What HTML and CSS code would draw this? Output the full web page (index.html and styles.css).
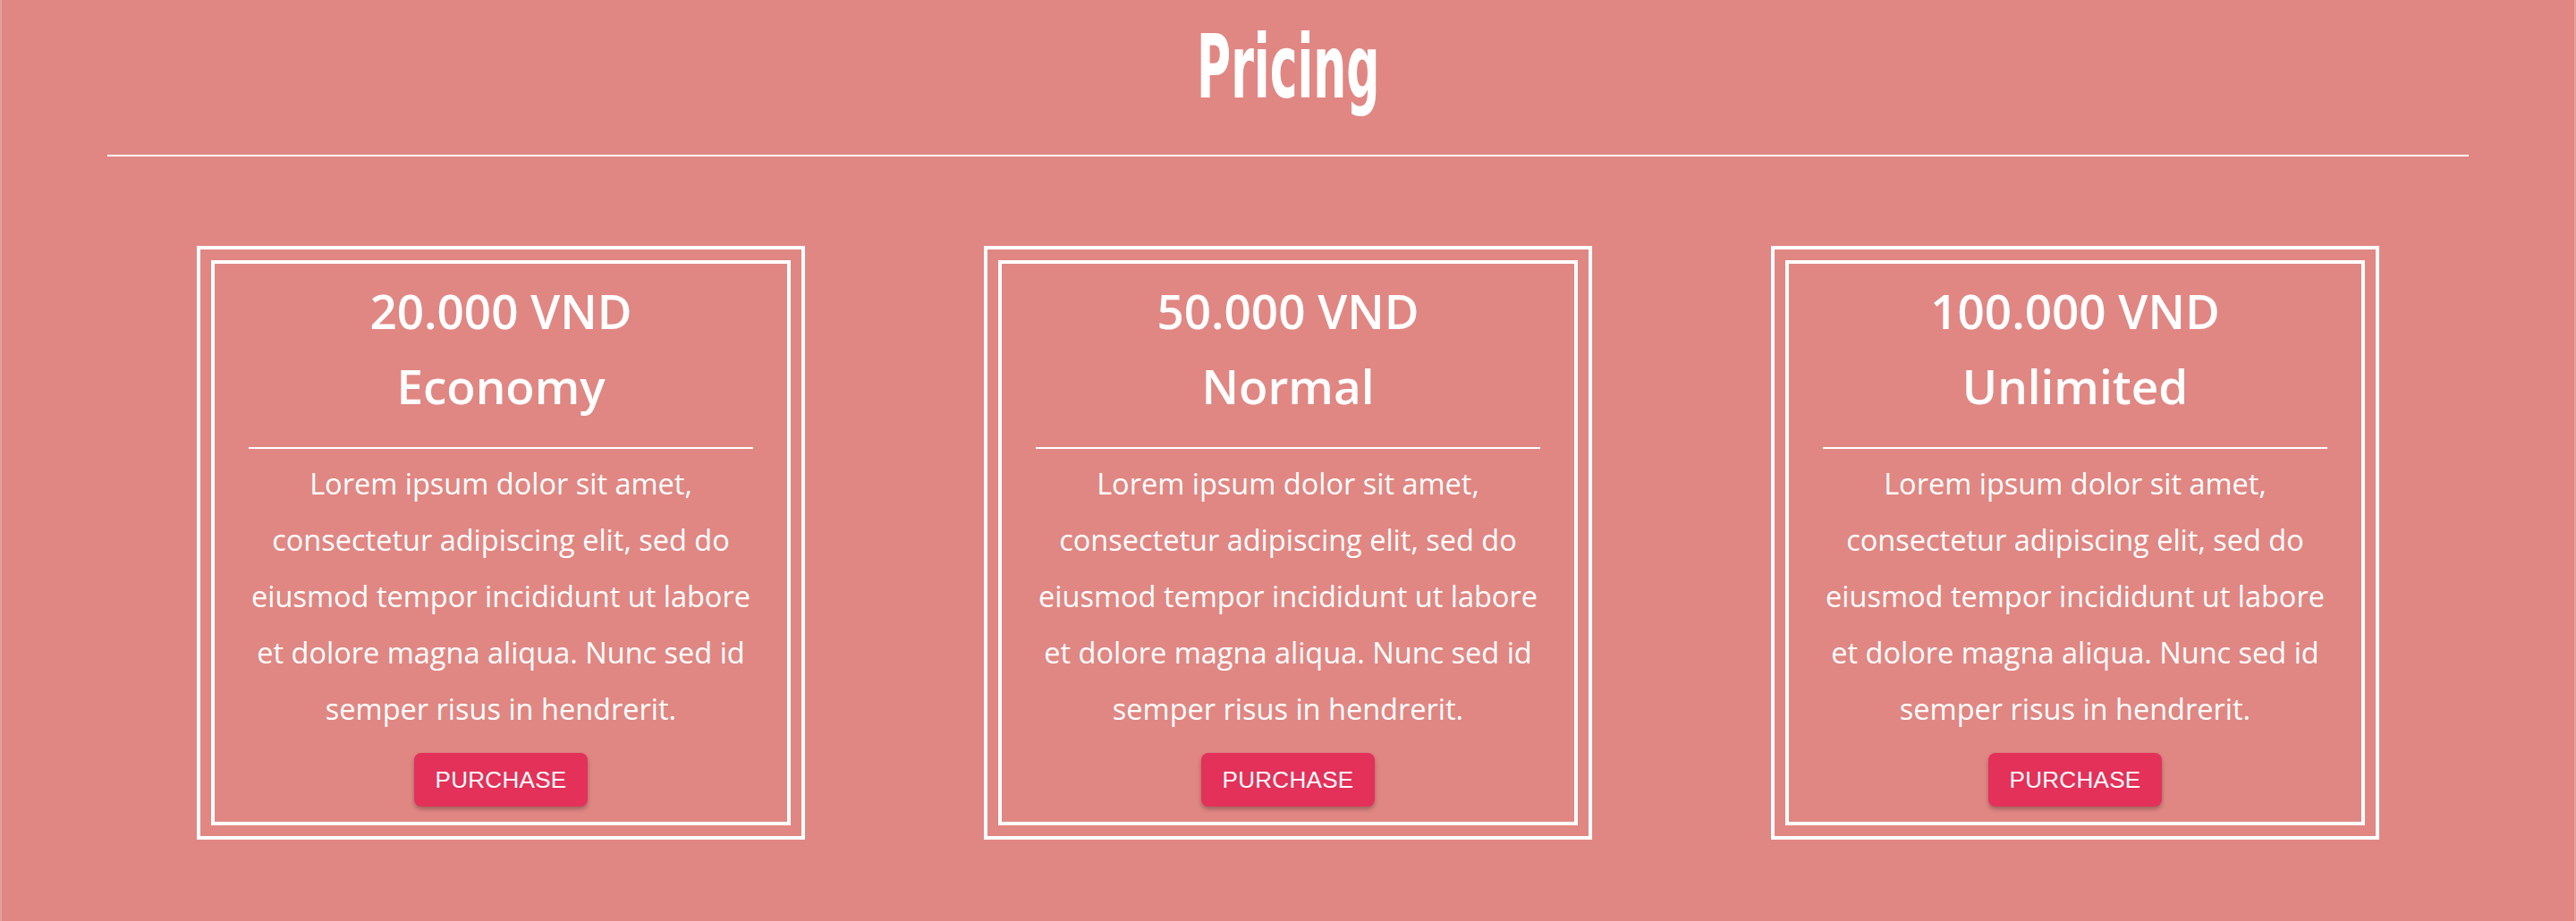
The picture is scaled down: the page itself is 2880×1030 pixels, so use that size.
FILE: index.html
```html
<!DOCTYPE html>
<html lang="en">
<head>
<meta charset="utf-8">
<title>Pricing</title>
<link rel="stylesheet" href="styles.css">
</head>
<body>
<section class="pricing">
  <header class="pricing-head">
    <h1 class="pricing-title"><span class="pricing-title-text">Pricing</span></h1>
    <div class="pricing-rule"></div>
  </header>
  <div class="cards">
    <div class="card">
      <div class="card-inner">
        <h2 class="card-price">20.000 VND</h2>
        <h3 class="card-name">Economy</h3>
        <div class="card-rule"></div>
        <p class="card-text">Lorem ipsum dolor sit amet,<br>consectetur adipiscing elit, sed do<br>eiusmod tempor incididunt ut labore<br>et dolore magna aliqua. Nunc sed id<br>semper risus in hendrerit.</p>
        <button class="btn-purchase">Purchase</button>
      </div>
    </div>
    <div class="card">
      <div class="card-inner">
        <h2 class="card-price">50.000 VND</h2>
        <h3 class="card-name">Normal</h3>
        <div class="card-rule"></div>
        <p class="card-text">Lorem ipsum dolor sit amet,<br>consectetur adipiscing elit, sed do<br>eiusmod tempor incididunt ut labore<br>et dolore magna aliqua. Nunc sed id<br>semper risus in hendrerit.</p>
        <button class="btn-purchase">Purchase</button>
      </div>
    </div>
    <div class="card">
      <div class="card-inner">
        <h2 class="card-price">100.000 VND</h2>
        <h3 class="card-name">Unlimited</h3>
        <div class="card-rule"></div>
        <p class="card-text">Lorem ipsum dolor sit amet,<br>consectetur adipiscing elit, sed do<br>eiusmod tempor incididunt ut labore<br>et dolore magna aliqua. Nunc sed id<br>semper risus in hendrerit.</p>
        <button class="btn-purchase">Purchase</button>
      </div>
    </div>
  </div>
</section>
</body>
</html>
```

FILE: styles.css
```css
html, body {
  margin: 0;
  padding: 0;
}

body {
  background: #e08783;
  color: #ffffff;
  font-family: "Open Sans", "Noto Sans", sans-serif;
  min-height: 1030px;
  box-shadow: inset 2px 0 0 #e8a09c, inset -2px 0 0 #e8a09c;
}

.pricing {
  padding-top: 26px;
}

.pricing-head {
  display: flex;
  flex-direction: column;
  align-items: center;
}

.pricing-title {
  margin: 0;
  font-family: "DejaVu Sans Condensed", "DejaVu Sans", sans-serif;
  font-weight: bold;
  font-size: 98px;
  line-height: 99px;
  height: 99px;
  text-align: center;
}

.pricing-title-text {
  display: inline-block;
  transform: scaleX(0.59);
  transform-origin: center;
}

.pricing-rule {
  align-self: stretch;
  margin: 48px 120px 0;
  height: 2px;
  background: #ffffff;
}

.cards {
  display: grid;
  grid-template-columns: repeat(3, 1fr);
  padding: 100px 120px 0;
}

.card {
  width: 680px;
  box-sizing: border-box;
  margin: 0 auto;
  border: 4px solid #ffffff;
  padding: 12px;
}

.card-inner {
  border: 4px solid #ffffff;
  padding: 11px 38px 17px;
  display: flex;
  flex-direction: column;
  align-items: center;
  text-align: center;
}

.card-price,
.card-name {
  margin: 0;
  font-size: 53px;
  line-height: 84px;
  font-weight: 600;
}

.card-rule {
  align-self: stretch;
  height: 2px;
  background: #ffffff;
  margin-top: 26px;
}

.card-text {
  margin: 7px 0 0;
  font-size: 32.5px;
  line-height: 63px;
  font-weight: 400;
  white-space: nowrap;
}

.btn-purchase {
  margin-top: 18px;
  height: 60px;
  padding: 0 24px;
  border: none;
  border-radius: 8px;
  background: #e3315a;
  color: #ffffff;
  font-family: "Liberation Sans", Arial, sans-serif;
  font-size: 26px;
  line-height: 60px;
  letter-spacing: 0.3px;
  text-transform: uppercase;
  box-shadow: 0 3px 5px rgba(0, 0, 0, 0.28);
  cursor: pointer;
}
```
